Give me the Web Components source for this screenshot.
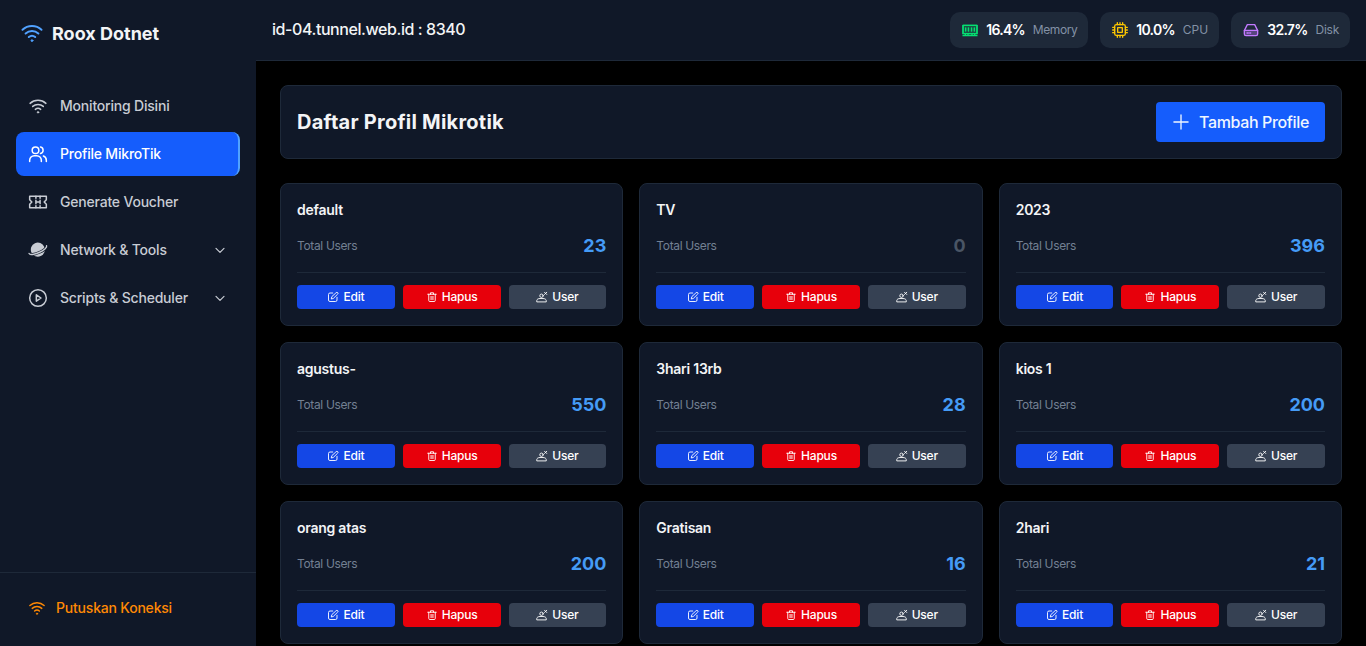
<!DOCTYPE html>
<html lang="id">
<head>
<meta charset="utf-8">
<title>Roox Dotnet</title>
<style>
  html, body { margin: 0; height: 100%; background: #000; overflow: hidden; }
  body { font-family: Inter, "Liberation Sans", sans-serif; }
</style>
</head>
<body>
<app-shell>
  <side-bar slot="side"></side-bar>
  <top-bar slot="top" host-label="id-04.tunnel.web.id : 8340"></top-bar>
  <page-head title-text="Daftar Profil Mikrotik"></page-head>
  <profile-grid></profile-grid>
</app-shell>

<script>
const ICONS = {
  wifi: `<path d="M2.5 8.8a14 14 0 0 1 19 0"/><path d="M5.6 12.5a9.6 9.6 0 0 1 12.8 0"/><path d="M8.8 16a5 5 0 0 1 6.4 0"/><circle cx="12" cy="19.6" r=".9" fill="currentColor" stroke-width="1"/>`,
  users: `<circle cx="9" cy="7.5" r="4"/><path d="M2 21v-1.5A5.5 5.5 0 0 1 7.5 14h3a5.5 5.5 0 0 1 5.5 5.5V21"/><path d="M15 3.6a4 4 0 0 1 0 7.8"/><path d="M22 21v-1.5a5.5 5.5 0 0 0-3.5-5.1"/>`,
  ticket: `<path d="M2 5h20v4.200l-2.600 2.800 2.600 2.800V19H2v-4.200L4.600 12 2 9.200z"/><path d="M9.500 5v2.500M14.500 5v2.500M9.500 16.500V19M14.500 16.500V19M9.500 10v4M14.500 10v4M9.500 12h5"/>`,
  planet: `<g transform="rotate(-24 12 12)"><circle cx="12" cy="11.500" r="8.400" fill="currentColor" stroke="none"/><path d="M.5 11.500a11.500 3.800 0 0 0 23 0" stroke="#101828" stroke-width="3.200"/><path d="M.5 11.500a11.500 3.800 0 0 0 23 0" stroke-width="1.700"/></g>`,
  play: `<circle cx="12" cy="12" r="10"/><path d="M10 8.200l5.600 3.800-5.600 3.800z"/>`,
  chevron: `<path d="M6 9.500l6 6 6-6"/>`,
  plus: `<path d="M12 3.500v17M3.500 12h17"/>`,
  edit: `<path d="M11.500 4H6a3 3 0 0 0-3 3v11a3 3 0 0 0 3 3h11a3 3 0 0 0 3-3v-5.500"/><path d="M18.400 3.200a2.100 2.100 0 0 1 3 3L12.500 15l-4 1 1-4z"/>`,
  trash: `<path d="M3.500 6.500h17M9 6.500V3.500h6v3"/><path d="M5.500 6.500v12.500a2 2 0 0 0 2 2h9a2 2 0 0 0 2-2V6.500"/><rect x="8.500" y="10" width="7" height="8" fill="currentColor" stroke="none" opacity=".55"/>`,
  usercog: `<circle cx="11" cy="9.500" r="3.400"/><path d="M1.500 21v-1.700c0-2.400 2.800-4.300 6.500-4.300h6c3.700 0 6.500 1.900 6.500 4.300V21z"/><path d="M17 2.500l4.500 4.500M21.500 2.500L17 7"/>`,
  ram: `<path fill="currentColor" fill-opacity=".25" d="M1.500 5h21v12.500h-21z"/><path d="M1.500 5h21v12.500h-21zM1.500 20.500h21M5.500 9v4.500M9.700 9v4.500M14.300 9v4.500M18.500 9v4.500M5 17.500v3M9 17.500v3M15 17.500v3M19 17.500v3"/>`,
  cpu: `<rect x="4" y="4" width="16" height="16" rx="2.500"/><rect x="8.500" y="8.500" width="7" height="7"/><path d="M8 1v3M12 1v3M16 1v3M8 20v3M12 20v3M16 20v3M1 8h3M1 12h3M1 16h3M20 8h3M20 12h3M20 16h3"/>`,
  disk: `<path d="M6.500 4h11l4.500 9v5a2.500 2.500 0 0 1-2.500 2.500h-15A2.500 2.500 0 0 1 2 18v-5z"/><path d="M2 12.500h20"/><path fill="currentColor" fill-opacity=".35" stroke="none" d="M2 13h20v5a2.500 2.500 0 0 1-2.500 2.500h-15A2.500 2.500 0 0 1 2 18z"/><path d="M6 16.500h2M10 16.500h1.500"/>`
};

function svgIcon(name, size, width) {
  return `<svg xmlns="http://www.w3.org/2000/svg" width="${size}" height="${size}" viewBox="0 0 24 24" fill="none" stroke="currentColor" stroke-width="${width || 2}" stroke-linecap="round" stroke-linejoin="round" style="display:block;flex:none">${ICONS[name]}</svg>`;
}

class AppShell extends HTMLElement {
  constructor() {
    super();
    this.attachShadow({mode: 'open'}).innerHTML = `
    <style>
      :host { display: flex; height: 100vh; overflow: hidden; background: #000; }
      .col { flex: 1; min-width: 0; display: flex; flex-direction: column; }
      main { flex: 1; min-height: 0; overflow: hidden; padding: 24px; display: flex; flex-direction: column; gap: 24px; }
    </style>
    <slot name="side"></slot>
    <div class="col">
      <slot name="top"></slot>
      <main><slot></slot></main>
    </div>`;
  }
}

class NavItem extends HTMLElement {
  constructor() {
    super();
    const arrow = this.hasAttribute('arrow');
    this.attachShadow({mode: 'open'}).innerHTML = `
    <style>
      :host { display: flex; align-items: center; height: 44px; box-sizing: border-box; padding: 0 12px; border-radius: 8px;
        gap: 12px; color: #c8ccd4; font-size: 14px; font-weight: 500; line-height: 20px; letter-spacing: -.2px; }
      :host([active]) { background: #155dfc; color: #fff; border-right: 2px solid #51a2ff; }
      span { flex: 1; white-space: nowrap; }
    </style>
    ${svgIcon(this.getAttribute('icon'), 20, 1.8)}
    <span><slot></slot></span>
    ${arrow ? svgIcon('chevron', 16, 1.8) : ''}`;
  }
}

class SideBar extends HTMLElement {
  constructor() {
    super();
    this.attachShadow({mode: 'open'}).innerHTML = `
    <style>
      :host { display: flex; flex-direction: column; flex: none; width: 256px; height: 100%; background: #101828; }
      .brand { display: flex; align-items: center; gap: 8px; height: 66px; padding: 0 20px; box-sizing: border-box;
        color: #f3f4f6; font-size: 18px; font-weight: 700; line-height: 28px; }
      .brand svg { color: #51a2ff; }
      .brand span { padding-top: 2px; }
      nav { flex: 1; display: flex; flex-direction: column; gap: 4px; padding: 18px 16px 0; }
      .foot { height: 74px; box-sizing: border-box; border-top: 1px solid #1e2939; padding: 0 28px 4px; display: flex; align-items: center; gap: 10px;
        color: #ff8904; font-size: 14px; font-weight: 500; letter-spacing: -.2px; }
    </style>
    <div class="brand">${svgIcon('wifi', 24, 2)}<span>Roox Dotnet</span></div>
    <nav>
      <nav-item icon="wifi">Monitoring Disini</nav-item>
      <nav-item icon="users" active>Profile MikroTik</nav-item>
      <nav-item icon="ticket">Generate Voucher</nav-item>
      <nav-item icon="planet" arrow>Network &amp; Tools</nav-item>
      <nav-item icon="play" arrow>Scripts &amp; Scheduler</nav-item>
    </nav>
    <div class="foot">${svgIcon('wifi', 18, 1.9)}<span>Putuskan Koneksi</span></div>`;
  }
}

class StatPill extends HTMLElement {
  constructor() {
    super();
    this.attachShadow({mode: 'open'}).innerHTML = `
    <style>
      :host { display: flex; align-items: center; height: 36px; box-sizing: border-box; padding: 0 11px 0 12px; gap: 8px;
        background: #1e2939; border-radius: 10px; }
      svg { color: var(--tint); }
      b { color: #fff; font-size: 14px; font-weight: 600; line-height: 20px; letter-spacing: -.75px; }
      span { color: #8391a6; font-size: 12px; line-height: 16px; letter-spacing: var(--track, -.25px); }
    </style>
    ${svgIcon(this.getAttribute('icon'), 16, 2)}
    <b>${this.getAttribute('value')}</b><span>${this.getAttribute('label')}</span>`;
  }
}

class TopBar extends HTMLElement {
  constructor() {
    super();
    this.attachShadow({mode: 'open'}).innerHTML = `
    <style>
      :host { display: flex; align-items: center; justify-content: space-between; flex: none; height: 61px; box-sizing: border-box;
        padding: 0 16px; background: #101828; border-bottom: 1px solid #1e2939; }
      .host { color: #f3f4f6; font-size: 16px; font-weight: 500; letter-spacing: -.43px; position: relative; top: -1px; }
      .stats { display: flex; gap: 12px; }
    </style>
    <div class="host">${this.getAttribute('host-label')}</div>
    <div class="stats">
      <stat-pill icon="ram" value="16.4%" label="Memory" style="--tint:#05df72;--track:-.42px"></stat-pill>
      <stat-pill icon="cpu" value="10.0%" label="CPU" style="--tint:#fdc700;--track:.08px"></stat-pill>
      <stat-pill icon="disk" value="32.7%" label="Disk" style="--tint:#c27aff"></stat-pill>
    </div>`;
  }
}

class PageHead extends HTMLElement {
  constructor() {
    super();
    this.attachShadow({mode: 'open'}).innerHTML = `
    <style>
      :host { display: flex; align-items: center; justify-content: space-between; flex: none; height: 74px; box-sizing: border-box;
        padding: 0 16px; background: #101828; border: 1px solid #1e2939; border-radius: 8px; }
      h1 { margin: 0; color: #f3f4f6; font-size: 20px; font-weight: 700; line-height: 28px; letter-spacing: .24px; }
      button { display: flex; align-items: center; gap: 8px; height: 40px; padding: 0 16px 0 15px; border: 0; border-radius: 4px;
        background: #155dfc; color: #eff6ff; font: 500 16px/24px Inter, "Liberation Sans", sans-serif; letter-spacing: -.36px; }
    </style>
    <h1>${this.getAttribute('title-text')}</h1>
    <button>${svgIcon('plus', 20, 1.6)}Tambah Profile</button>`;
  }
}

class ActionButton extends HTMLElement {
  constructor() {
    super();
    this.attachShadow({mode: 'open'}).innerHTML = `
    <style>
      :host { display: flex; align-items: center; justify-content: center; gap: 4px; height: 24px; border-radius: 4px;
        background: var(--bg); color: #fff; font-size: 12px; font-weight: 500; line-height: 16px; letter-spacing: -.2px; }
    </style>
    ${svgIcon(this.getAttribute('icon'), 12, 1.8)}<slot></slot>`;
  }
}

class ProfileCard extends HTMLElement {
  constructor() {
    super();
    const total = this.getAttribute('total');
    this.attachShadow({mode: 'open'}).innerHTML = `
    <style>
      :host { display: block; box-sizing: border-box; height: 143px; padding: 16px; background: #101828;
        border: 1px solid #1e2939; border-radius: 8px; }
      h2 { margin: 0; height: 20px; color: #f3f4f6; font-size: 14px; font-weight: 600; line-height: 20px; letter-spacing: -.25px; }
      .row { display: flex; align-items: center; justify-content: space-between; margin-top: 12px; height: 28px; padding-bottom: 12px;
        border-bottom: 1px solid #1e2939; }
      .row span { color: #738093; font-size: 12px; line-height: 16px; letter-spacing: -.35px; }
      .row b { font-size: 18px; font-weight: 700; line-height: 28px; color: ${total === '0' ? '#4a5565' : '#459bf6'}; }
      .acts { display: grid; grid-template-columns: 1fr 1fr 1fr; gap: 8px; margin-top: 12px; }
    </style>
    <h2>${this.getAttribute('name')}</h2>
    <div class="row"><span>Total Users</span><b>${total}</b></div>
    <div class="acts">
      <action-button icon="edit" style="--bg:#1447e6">Edit</action-button>
      <action-button icon="trash" style="--bg:#e7000b">Hapus</action-button>
      <action-button icon="usercog" style="--bg:#364153">User</action-button>
    </div>`;
  }
}

class ProfileGrid extends HTMLElement {
  constructor() {
    super();
    const profiles = [
      ['default', '23'], ['TV', '0'], ['2023', '396'],
      ['agustus-', '550'], ['3hari 13rb', '28'], ['kios 1', '200'],
      ['orang atas', '200'], ['Gratisan', '16'], ['2hari', '21']
    ];
    this.attachShadow({mode: 'open'}).innerHTML = `
    <style>
      :host { display: grid; grid-template-columns: repeat(3, 1fr); gap: 16px; flex: none; }
    </style>
    ${profiles.map(p => `<profile-card name="${p[0]}" total="${p[1]}"></profile-card>`).join('')}`;
  }
}

customElements.define('nav-item', NavItem);
customElements.define('side-bar', SideBar);
customElements.define('stat-pill', StatPill);
customElements.define('top-bar', TopBar);
customElements.define('page-head', PageHead);
customElements.define('action-button', ActionButton);
customElements.define('profile-card', ProfileCard);
customElements.define('profile-grid', ProfileGrid);
customElements.define('app-shell', AppShell);
</script>
</body>
</html>
